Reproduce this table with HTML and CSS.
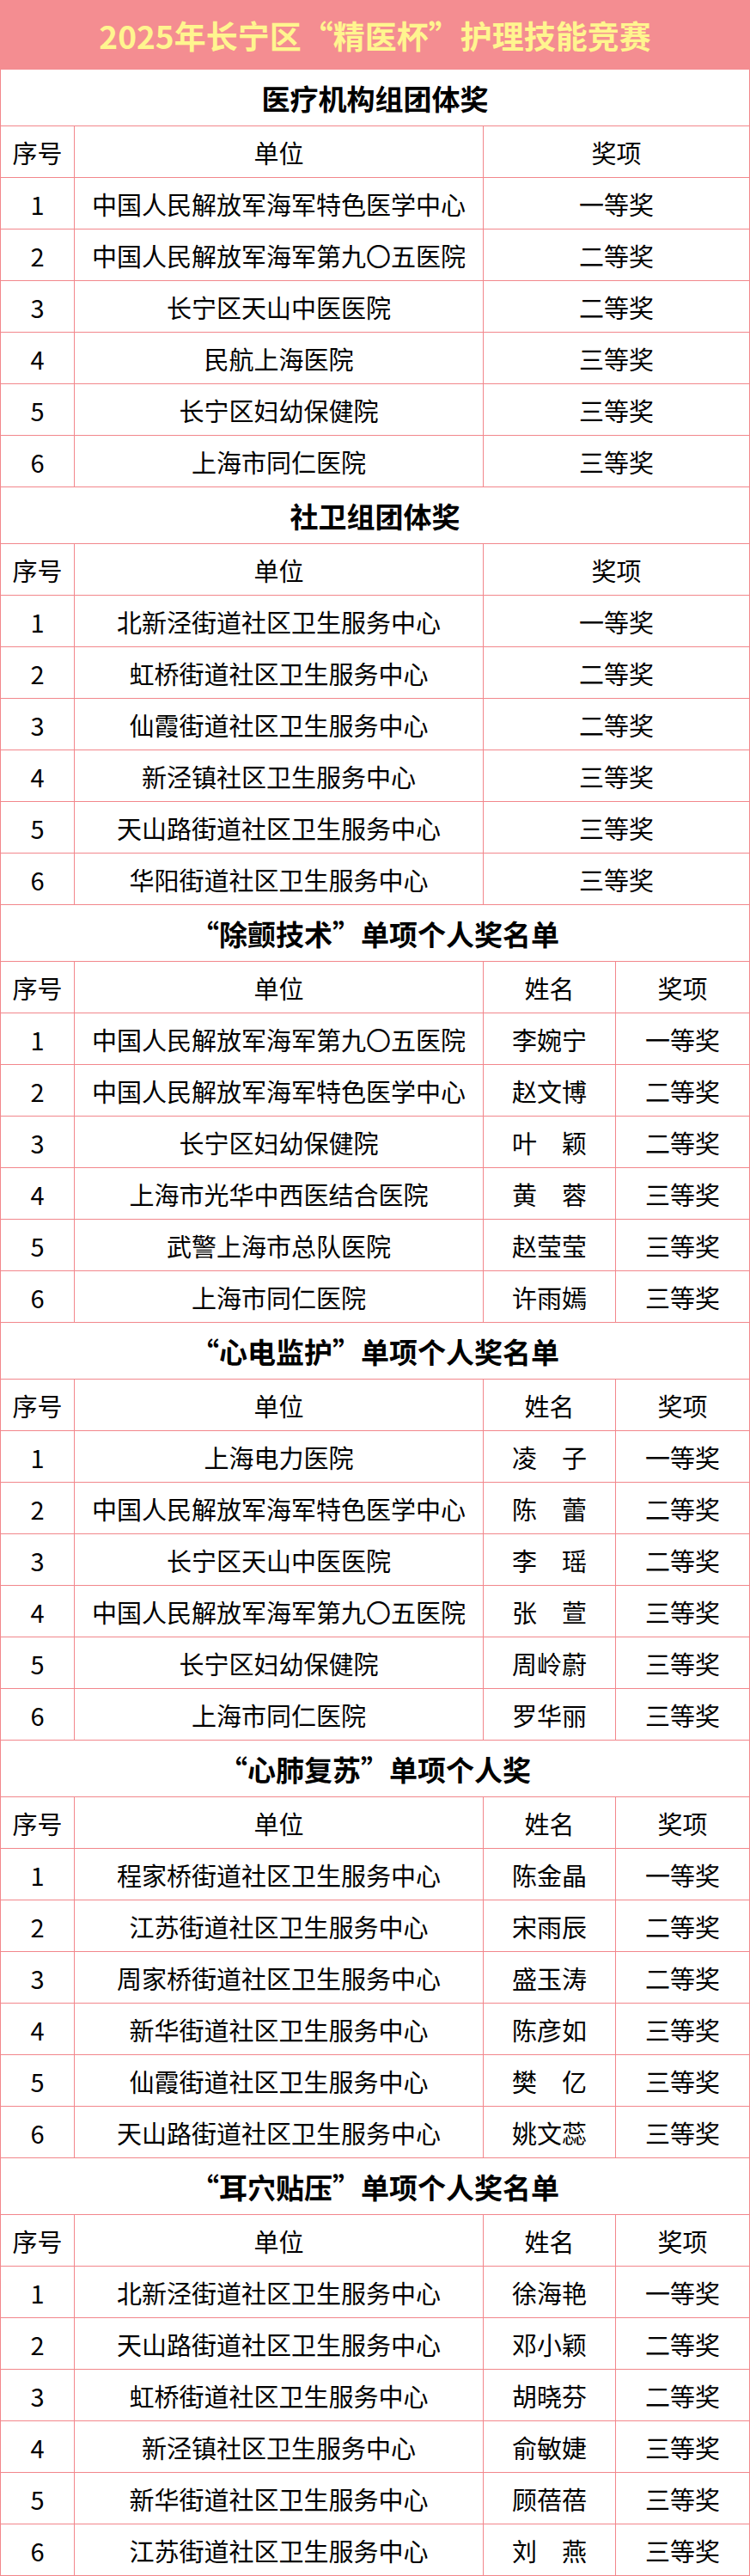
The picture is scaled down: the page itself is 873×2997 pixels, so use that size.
FILE: index.html
```html
<!DOCTYPE html>
<html lang="zh-CN">
<head>
<meta charset="utf-8">
<title>2025年长宁区“精医杯”护理技能竞赛</title>
<link rel="stylesheet" href="styles.css">
</head>
<body>
<div class="page">
  <div class="title">2025年长宁区“精医杯”护理技能竞赛</div>

  <div class="section">
    <div class="sec-head">医疗机构组团体奖</div>
    <div class="row three"><div class="c">序号</div><div class="c">单位</div><div class="c">奖项</div></div>
    <div class="row three"><div class="c">1</div><div class="c">中国人民解放军海军特色医学中心</div><div class="c">一等奖</div></div>
    <div class="row three"><div class="c">2</div><div class="c">中国人民解放军海军第九〇五医院</div><div class="c">二等奖</div></div>
    <div class="row three"><div class="c">3</div><div class="c">长宁区天山中医医院</div><div class="c">二等奖</div></div>
    <div class="row three"><div class="c">4</div><div class="c">民航上海医院</div><div class="c">三等奖</div></div>
    <div class="row three"><div class="c">5</div><div class="c">长宁区妇幼保健院</div><div class="c">三等奖</div></div>
    <div class="row three"><div class="c">6</div><div class="c">上海市同仁医院</div><div class="c">三等奖</div></div>
  </div>

  <div class="section">
    <div class="sec-head">社卫组团体奖</div>
    <div class="row three"><div class="c">序号</div><div class="c">单位</div><div class="c">奖项</div></div>
    <div class="row three"><div class="c">1</div><div class="c">北新泾街道社区卫生服务中心</div><div class="c">一等奖</div></div>
    <div class="row three"><div class="c">2</div><div class="c">虹桥街道社区卫生服务中心</div><div class="c">二等奖</div></div>
    <div class="row three"><div class="c">3</div><div class="c">仙霞街道社区卫生服务中心</div><div class="c">二等奖</div></div>
    <div class="row three"><div class="c">4</div><div class="c">新泾镇社区卫生服务中心</div><div class="c">三等奖</div></div>
    <div class="row three"><div class="c">5</div><div class="c">天山路街道社区卫生服务中心</div><div class="c">三等奖</div></div>
    <div class="row three"><div class="c">6</div><div class="c">华阳街道社区卫生服务中心</div><div class="c">三等奖</div></div>
  </div>

  <div class="section">
    <div class="sec-head">“除颤技术”单项个人奖名单</div>
    <div class="row four"><div class="c">序号</div><div class="c">单位</div><div class="c">姓名</div><div class="c">奖项</div></div>
    <div class="row four"><div class="c">1</div><div class="c">中国人民解放军海军第九〇五医院</div><div class="c">李婉宁</div><div class="c">一等奖</div></div>
    <div class="row four"><div class="c">2</div><div class="c">中国人民解放军海军特色医学中心</div><div class="c">赵文博</div><div class="c">二等奖</div></div>
    <div class="row four"><div class="c">3</div><div class="c">长宁区妇幼保健院</div><div class="c">叶　颖</div><div class="c">二等奖</div></div>
    <div class="row four"><div class="c">4</div><div class="c">上海市光华中西医结合医院</div><div class="c">黄　蓉</div><div class="c">三等奖</div></div>
    <div class="row four"><div class="c">5</div><div class="c">武警上海市总队医院</div><div class="c">赵莹莹</div><div class="c">三等奖</div></div>
    <div class="row four"><div class="c">6</div><div class="c">上海市同仁医院</div><div class="c">许雨嫣</div><div class="c">三等奖</div></div>
  </div>

  <div class="section">
    <div class="sec-head">“心电监护”单项个人奖名单</div>
    <div class="row four"><div class="c">序号</div><div class="c">单位</div><div class="c">姓名</div><div class="c">奖项</div></div>
    <div class="row four"><div class="c">1</div><div class="c">上海电力医院</div><div class="c">凌　子</div><div class="c">一等奖</div></div>
    <div class="row four"><div class="c">2</div><div class="c">中国人民解放军海军特色医学中心</div><div class="c">陈　蕾</div><div class="c">二等奖</div></div>
    <div class="row four"><div class="c">3</div><div class="c">长宁区天山中医医院</div><div class="c">李　瑶</div><div class="c">二等奖</div></div>
    <div class="row four"><div class="c">4</div><div class="c">中国人民解放军海军第九〇五医院</div><div class="c">张　萱</div><div class="c">三等奖</div></div>
    <div class="row four"><div class="c">5</div><div class="c">长宁区妇幼保健院</div><div class="c">周岭蔚</div><div class="c">三等奖</div></div>
    <div class="row four"><div class="c">6</div><div class="c">上海市同仁医院</div><div class="c">罗华丽</div><div class="c">三等奖</div></div>
  </div>

  <div class="section">
    <div class="sec-head">“心肺复苏”单项个人奖</div>
    <div class="row four"><div class="c">序号</div><div class="c">单位</div><div class="c">姓名</div><div class="c">奖项</div></div>
    <div class="row four"><div class="c">1</div><div class="c">程家桥街道社区卫生服务中心</div><div class="c">陈金晶</div><div class="c">一等奖</div></div>
    <div class="row four"><div class="c">2</div><div class="c">江苏街道社区卫生服务中心</div><div class="c">宋雨辰</div><div class="c">二等奖</div></div>
    <div class="row four"><div class="c">3</div><div class="c">周家桥街道社区卫生服务中心</div><div class="c">盛玉涛</div><div class="c">二等奖</div></div>
    <div class="row four"><div class="c">4</div><div class="c">新华街道社区卫生服务中心</div><div class="c">陈彦如</div><div class="c">三等奖</div></div>
    <div class="row four"><div class="c">5</div><div class="c">仙霞街道社区卫生服务中心</div><div class="c">樊　亿</div><div class="c">三等奖</div></div>
    <div class="row four"><div class="c">6</div><div class="c">天山路街道社区卫生服务中心</div><div class="c">姚文蕊</div><div class="c">三等奖</div></div>
  </div>

  <div class="section">
    <div class="sec-head">“耳穴贴压”单项个人奖名单</div>
    <div class="row four"><div class="c">序号</div><div class="c">单位</div><div class="c">姓名</div><div class="c">奖项</div></div>
    <div class="row four"><div class="c">1</div><div class="c">北新泾街道社区卫生服务中心</div><div class="c">徐海艳</div><div class="c">一等奖</div></div>
    <div class="row four"><div class="c">2</div><div class="c">天山路街道社区卫生服务中心</div><div class="c">邓小颖</div><div class="c">二等奖</div></div>
    <div class="row four"><div class="c">3</div><div class="c">虹桥街道社区卫生服务中心</div><div class="c">胡晓芬</div><div class="c">二等奖</div></div>
    <div class="row four"><div class="c">4</div><div class="c">新泾镇社区卫生服务中心</div><div class="c">俞敏婕</div><div class="c">三等奖</div></div>
    <div class="row four"><div class="c">5</div><div class="c">新华街道社区卫生服务中心</div><div class="c">顾蓓蓓</div><div class="c">三等奖</div></div>
    <div class="row four"><div class="c">6</div><div class="c">江苏街道社区卫生服务中心</div><div class="c">刘　燕</div><div class="c">三等奖</div></div>
  </div>
</div>
</body>
</html>
```

FILE: styles.css
```css
* { box-sizing: border-box; }
html, body { margin: 0; padding: 0; background: #ffffff; }
body {
  font-family: "Noto Sans CJK SC", "Noto Sans", sans-serif;
  color: #000000;
}
.page { width: 873px; }
.title {
  height: 81px;
  background: #f48d91;
  color: #fff58f;
  font-weight: 700;
  font-size: 37px;
  display: flex;
  align-items: center;
  justify-content: center;
}
.section {
  border-left: 1px solid #f2878c;
}
.sec-head {
  height: 66px;
  border-right: 1px solid #f2878c;
  border-bottom: 1px solid #f2878c;
  font-size: 33px;
  font-weight: 700;
  display: flex;
  align-items: center;
  justify-content: center;
}
.row {
  display: grid;
  height: 60px;
}
.row.three { grid-template-columns: 86px 476px 1fr; }
.row.four { grid-template-columns: 86px 476px 154px 1fr; }
.c {
  border-right: 1px solid #f2878c;
  border-bottom: 1px solid #f2878c;
  display: flex;
  align-items: center;
  justify-content: center;
  font-size: 29px;
  white-space: nowrap;
}
```
